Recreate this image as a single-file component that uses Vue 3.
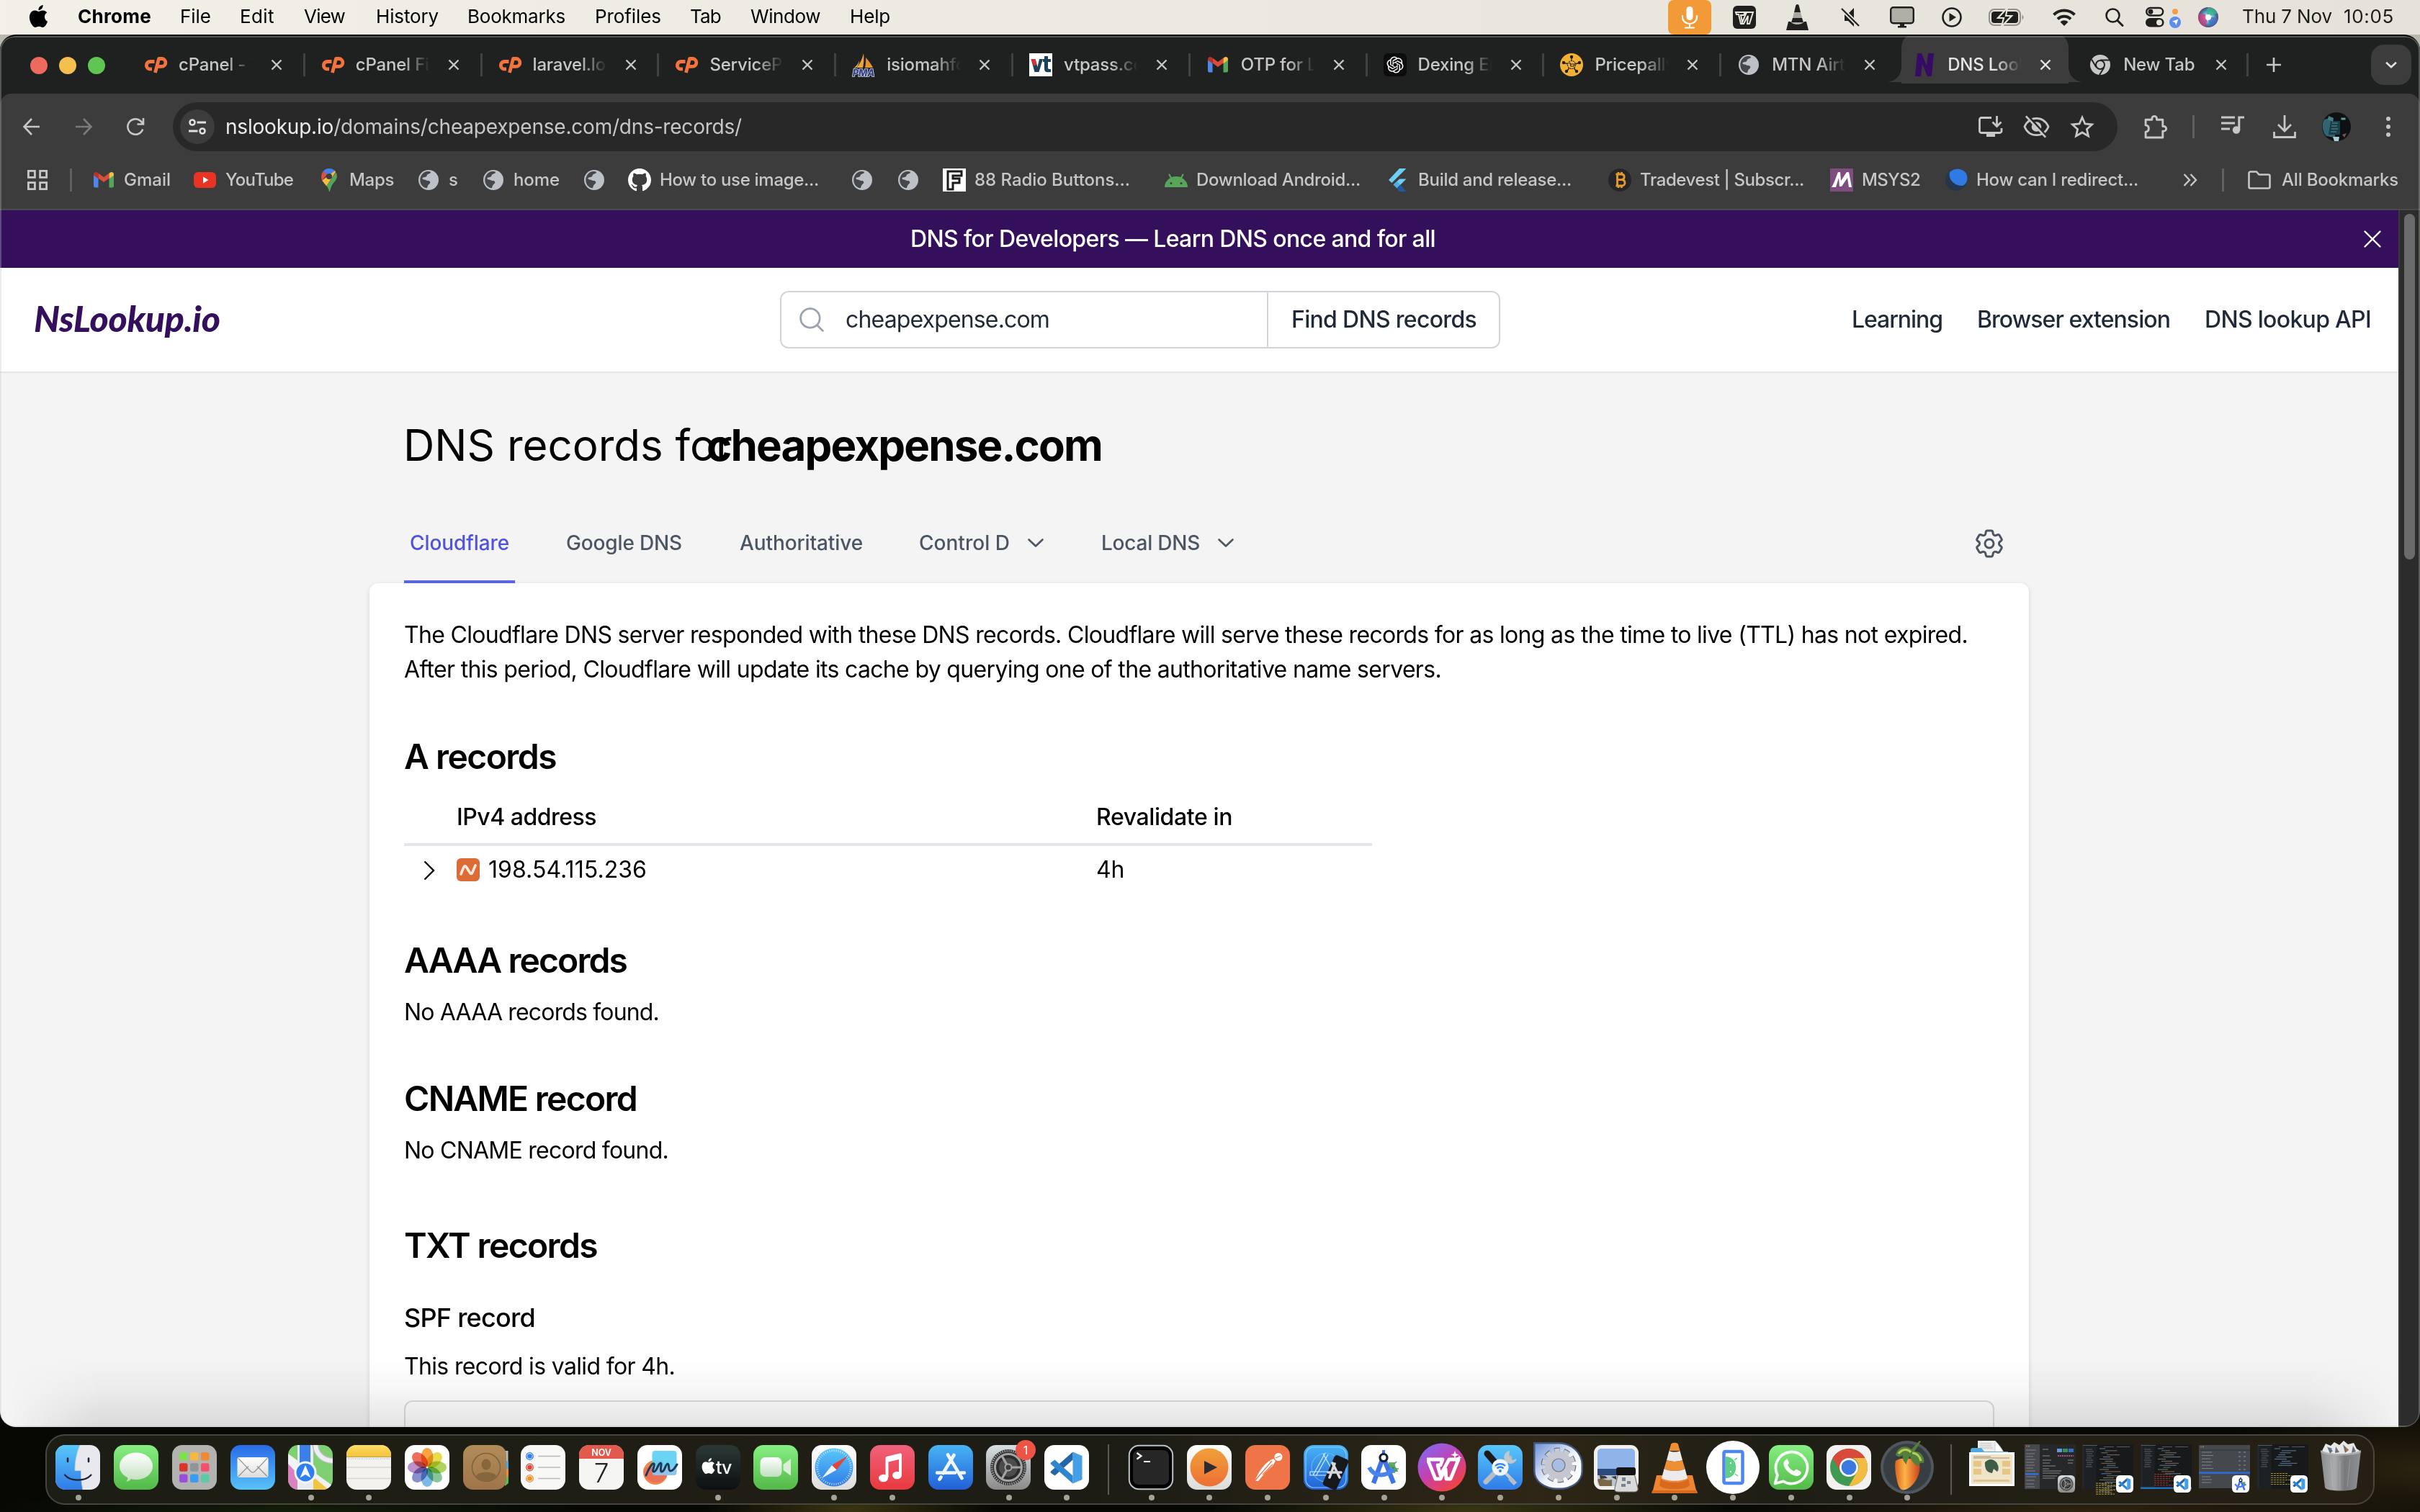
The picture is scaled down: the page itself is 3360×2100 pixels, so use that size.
<script setup>
// Spreads the letters of a label so that it takes the given width in pixels.
const vFit = {
  mounted(el, { value }) {
    if (!value) return
    const natural = el.getBoundingClientRect().width
    el.style.letterSpacing = (value - natural) / el.textContent.length + 'px'
  },
}

const menus = [
  { label: 'Chrome', slot: 142, w: 102 },
  { label: 'File', slot: 83, w: 43 },
  { label: 'Edit', slot: 89, w: 48 },
  { label: 'View', slot: 100, w: 57 },
  { label: 'History', slot: 127, w: 87 },
  { label: 'Bookmarks', slot: 177, w: 136 },
  { label: 'Profiles', slot: 132, w: 92 },
  { label: 'Tab', slot: 84, w: 43 },
  { label: 'Window', slot: 138, w: 97 },
  { label: 'Help', slot: 80, w: 56 },
]

const status = [
  { id: 's-mic', w: 60, h: 48, slot: 90 },
  { id: 's-wps', w: 32, h: 32, slot: 74 },
  { id: 's-cone', w: 31, h: 36, slot: 76 },
  { id: 's-mute', w: 26, h: 28, slot: 68 },
  { id: 's-display', w: 34, h: 30, slot: 72 },
  { id: 's-play', w: 28, h: 28, slot: 65 },
  { id: 's-battery', w: 49, h: 24, slot: 88 },
  { id: 's-wifi', w: 34, h: 26, slot: 74 },
  { id: 's-search', w: 25, h: 26, slot: 56 },
  { id: 's-control', w: 49, h: 30, slot: 73 },
  { id: 's-siri', w: 28, h: 28, slot: 61 },
]

const tabs = [
  { icon: 'f-cpanel', label: 'cPanel - Tools' },
  { icon: 'f-cpanel', label: 'cPanel File' },
  { icon: 'f-cpanel', label: 'laravel.log' },
  { icon: 'f-cpanel', label: 'ServicePro' },
  { icon: 'f-pma', label: 'isiomahfoods' },
  { icon: 'f-vt', label: 'vtpass.com' },
  { icon: 'f-gmail', label: 'OTP for Lo' },
  { icon: 'f-openai', label: 'Dexing Eng' },
  { icon: 'f-price', label: 'Pricepally' },
  { icon: 'f-globe', label: 'MTN Airtime', narrow: true },
  { icon: 'f-ns', label: 'DNS Lookup', narrow: true, active: true },
  { icon: 'f-chrome', label: 'New Tab', narrow: true },
]

const bookmarks = [
  { icon: 'f-gmail', label: 'Gmail', slot: 141, w: 65 },
  { icon: 'f-youtube', label: 'YouTube', slot: 172, w: 94 },
  { icon: 'f-maps', label: 'Maps', slot: 138, w: 62 },
  { icon: 'f-globe', label: 's', slot: 90 },
  { icon: 'f-globe', label: 'home', slot: 140, w: 64 },
  { icon: 'f-globe', label: '', slot: 63 },
  { icon: 'f-github', label: 'How to use image...', slot: 309, w: 221 },
  { icon: 'f-globe', label: '', slot: 64 },
  { icon: 'f-globe', label: '', slot: 64 },
  { icon: 'f-fbox', label: '88 Radio Buttons...', slot: 308, w: 216 },
  { icon: 'f-android', label: 'Download Android...', slot: 308, w: 228 },
  { icon: 'f-flutter', label: 'Build and release...', slot: 308, w: 213 },
  { icon: 'f-bitcoin', label: 'Tradevest | Subscr...', slot: 308, w: 228 },
  { icon: 'f-msys', label: 'MSYS2', slot: 159, w: 81 },
  { icon: 'f-moon', label: 'How can I redirect...', slot: 300, w: 225 },
]

const resolvers = [
  { label: 'Cloudflare', slot: 217, w: 138, active: true },
  { label: 'Google DNS', slot: 241, w: 161 },
  { label: 'Authoritative', slot: 249, w: 171 },
  { label: 'Control D', slot: 253, w: 126, menu: true },
  { label: 'Local DNS', slot: 240, w: 137, menu: true },
]

const dockMain = [
  { id: 'd-finder', run: true }, { id: 'd-messages' }, { id: 'd-launchpad' }, { id: 'd-mail' },
  { id: 'd-maps', run: true }, { id: 'd-notes', run: true }, { id: 'd-photos' }, { id: 'd-contacts' },
  { id: 'd-reminders' }, { id: 'd-calendar' }, { id: 'd-freeform' }, { id: 'd-tv', run: true },
  { id: 'd-facetime' }, { id: 'd-safari', run: true }, { id: 'd-music', run: true }, { id: 'd-appstore' },
  { id: 'd-settings', run: true, badge: '1' }, { id: 'd-vscode', run: true },
]
const dockApps = [
  'd-terminal', 'd-player', 'd-postman', 'd-simulator', 'd-studio', 'd-wps', 'd-wireless',
  'd-cog', 'd-preview', 'd-vlc', 'd-emulator', 'd-whatsapp', 'd-chrome', 'd-fl',
]

const petals = ['#f59b2c', '#e6d83a', '#a8cf4b', '#7bc08c', '#6fb2e2', '#7d84c6', '#b685c4', '#ee5d4b']
const spokes = Array.from({ length: 48 }, (_, i) => i * 7.5)
const padColors = ['#7be04a', '#f5b840', '#ef8a34', '#d8352c', '#8f9698', '#f2506b', '#9b4fd8', '#3a9cf0', '#5cc9a7']

// Rows of code in the minimised editor windows: indent, length and tint of each.
function codeRows(count, seed) {
  const tints = ['#5f7f9e', '#8a6a55', '#6d7f6a', '#6f6f76']
  return Array.from({ length: count }, (_, i) => ({
    y: 6 + i * 2.9,
    x: 24 + ((i * seed) % 5) * 2.5,
    w: 8 + ((i * seed * 3) % 17),
    tint: tints[(i * seed) % 4],
  }))
}
const minimised = [
  { kind: 'editor', rows: codeRows(22, 3), term: '#a58c3a', termY: 84 },
  { kind: 'editor', rows: codeRows(13, 7), term: '#a63a34', termY: 64, bar: true },
  { kind: 'list' },
  { kind: 'editor', rows: codeRows(9, 4), term: '#a08a2e', termY: 62 },
]
</script>

<template>
  <div class="screen">
    <svg class="sprite" width="0" height="0" aria-hidden="true">
      <defs>
        <linearGradient id="gBlue" x1="0" y1="0" x2="0" y2="1"><stop offset="0" stop-color="#5ac8fa" /><stop offset="1" stop-color="#2f7be8" /></linearGradient>
        <linearGradient id="gBlueUp" x1="0" y1="0" x2="0" y2="1"><stop offset="0" stop-color="#2a6be8" /><stop offset="1" stop-color="#57c3f8" /></linearGradient>
        <linearGradient id="gStore" x1="0" y1="0" x2="0" y2="1"><stop offset="0" stop-color="#48b4f4" /><stop offset="1" stop-color="#2160d8" /></linearGradient>
        <linearGradient id="gGreen" x1="0" y1="0" x2="0" y2="1"><stop offset="0" stop-color="#86ee83" /><stop offset="1" stop-color="#53b948" /></linearGradient>
        <linearGradient id="gWhite" x1="0" y1="0" x2="0" y2="1"><stop offset="0" stop-color="#ffffff" /><stop offset="1" stop-color="#dcdcda" /></linearGradient>
        <linearGradient id="gPearl" x1="0" y1="0" x2="0" y2="1"><stop offset="0" stop-color="#ffffff" /><stop offset="1" stop-color="#c2dfbf" /></linearGradient>
        <linearGradient id="gRed" x1="0" y1="0" x2="0" y2="1"><stop offset="0" stop-color="#f0627a" /><stop offset="1" stop-color="#e9393f" /></linearGradient>
        <linearGradient id="gBrown" x1="0" y1="0" x2="0" y2="1"><stop offset="0" stop-color="#b18d58" /><stop offset="1" stop-color="#a0744a" /></linearGradient>
        <linearGradient id="gYellow" x1="0" y1="0" x2="0" y2="1"><stop offset="0" stop-color="#fbdc6a" /><stop offset="1" stop-color="#f7c435" /></linearGradient>
        <linearGradient id="gTv" x1="0" y1="0" x2="0" y2="1"><stop offset="0" stop-color="#2b3836" /><stop offset="1" stop-color="#0c1012" /></linearGradient>
        <linearGradient id="gGrey" x1="0" y1="0" x2="0" y2="1"><stop offset="0" stop-color="#d8e0e4" /><stop offset="1" stop-color="#8c8a88" /></linearGradient>
        <linearGradient id="gOrange" x1="0" y1="0" x2="0" y2="1"><stop offset="0" stop-color="#f0a03a" /><stop offset="1" stop-color="#ee6f34" /></linearGradient>
        <linearGradient id="gWps" x1="0.1" y1="0" x2="0.8" y2="1"><stop offset="0" stop-color="#7d6cf6" /><stop offset="0.5" stop-color="#c540b0" /><stop offset="1" stop-color="#f8432e" /></linearGradient>
        <linearGradient id="gFruit" x1="0" y1="0" x2="1" y2="0"><stop offset="0" stop-color="#d9651f" /><stop offset="0.4" stop-color="#ffb347" /><stop offset="1" stop-color="#c8431a" /></linearGradient>
        <linearGradient id="gMetal" x1="0" y1="0" x2="1" y2="0"><stop offset="0" stop-color="#8a8c8d" /><stop offset="0.35" stop-color="#a9abac" /><stop offset="0.6" stop-color="#77797a" /><stop offset="1" stop-color="#8f9192" /></linearGradient>
        <linearGradient id="gGearBlue" x1="0" y1="0" x2="1" y2="1"><stop offset="0" stop-color="#6f93d8" /><stop offset="0.55" stop-color="#f3f6fc" /><stop offset="1" stop-color="#ffffff" /></linearGradient>
        <radialGradient id="gSiri"><stop offset="0" stop-color="#ffffff" /><stop offset="0.35" stop-color="#9fc6ee" /><stop offset="0.7" stop-color="#3f8f9c" /><stop offset="1" stop-color="#5a3f86" /></radialGradient>
        <clipPath id="round"><rect width="62" height="62" rx="14" /></clipPath>
      </defs>

      <!-- Menu bar -->
      <symbol id="s-mic" viewBox="0 0 60 48"><rect width="60" height="48" rx="8" fill="#f29a38" /><rect x="25.500" y="9" width="9" height="19" rx="4.500" fill="#fff" /><path d="M20 22v2a10 9 0 0 0 20 0v-2M30 33v5M24 38.500h12" fill="none" stroke="#fff" stroke-width="2.200" stroke-linecap="round" /></symbol>
      <symbol id="s-wps" viewBox="0 0 32 32"><rect width="32" height="32" rx="6" fill="#1f1f1d" /><path d="M4 9h13l-2 4h-4l2 10 6-14h9l-5 16h-3l1-11-6 11h-4L8 12H5z" fill="none" stroke="#e9e6dc" stroke-width="2" /></symbol>
      <symbol id="s-cone" viewBox="0 0 31 36"><path d="M15.500 0c1.500 0 2 1 2.300 2L20 11h-9l2.200-9c.3-1 .8-2 2.300-2z" fill="#1f1f1d" /><path d="M11 11h9l2 8H9z" fill="#a8a69e" /><path d="M9 19h13l2 6.500H7z" fill="#1f1f1d" /><path d="M7 25h17c-2 2.500-15 2.500-17 0z" fill="#a8a69e" /><path d="M3 24h3c3 5 16 5 19 0h3l3 12H0z" fill="#1f1f1d" /></symbol>
      <symbol id="s-mute" viewBox="0 0 26 28"><path d="M5 9h5l8-8v26l-8-8H5z" fill="#1f1f1d" /><path d="M1 2l24 24" stroke="#e6e3da" stroke-width="6" /><path d="M1 2l24 24" stroke="#1f1f1d" stroke-width="2.200" /></symbol>
      <symbol id="s-display" viewBox="0 0 34 30"><rect x="1.200" y="1.200" width="31.600" height="22" rx="3.500" fill="#b1aea6" stroke="#1f1f1d" stroke-width="2.400" /><path d="M14 24h6v3h3v2.500H11V27h3z" fill="#1f1f1d" /></symbol>
      <symbol id="s-play" viewBox="0 0 28 28"><circle cx="14" cy="14" r="12.500" fill="none" stroke="#1f1f1d" stroke-width="2.600" /><path d="M10.500 8l9.500 6-9.500 6z" fill="#1f1f1d" /></symbol>
      <symbol id="s-battery" viewBox="0 0 49 24"><rect x="1" y="1" width="43" height="22" rx="7" fill="none" stroke="#94918a" stroke-width="2" /><rect x="4" y="4" width="37" height="16" rx="4" fill="#1f1f1d" /><path d="M46.500 8.500a4 4 0 0 1 0 7z" fill="#94918a" /><path d="M26-1L13 13h8l-3 12L32 10h-8z" fill="#1f1f1d" stroke="#e6e3da" stroke-width="2.200" /></symbol>
      <symbol id="s-wifi" viewBox="0 0 34 26"><path d="M2.500 9.500a20.500 20.500 0 0 1 29 0M8 15.500a12.500 12.500 0 0 1 18 0" fill="none" stroke="#1f1f1d" stroke-width="4" /><path d="M17 25l-5.500-5.500a8 8 0 0 1 11 0z" fill="#1f1f1d" /></symbol>
      <symbol id="s-search" viewBox="0 0 25 26"><circle cx="10.500" cy="10.500" r="9" fill="none" stroke="#1f1f1d" stroke-width="2.600" /><path d="M17 17.500l7 7" stroke="#1f1f1d" stroke-width="3" stroke-linecap="round" /></symbol>
      <symbol id="s-control" viewBox="0 0 49 30"><rect x="1.200" y="2" width="23" height="10.500" rx="5.250" fill="none" stroke="#1f1f1d" stroke-width="2.400" /><circle cx="7" cy="7.250" r="3.400" fill="#1f1f1d" /><rect y="16" width="25.500" height="12.500" rx="6.250" fill="#1f1f1d" /><circle cx="19" cy="22.250" r="4" fill="#e6e3da" /><circle cx="41" cy="7" r="4" fill="#ee9e4c" /><circle cx="41" cy="22" r="8" fill="#5b8def" /><path d="M45.500 17.500l-3.200 8.500-1.500-3.800-3.800-1.500z" fill="#fff" /></symbol>
      <symbol id="s-siri" viewBox="0 0 28 28"><circle cx="14" cy="14" r="14" fill="url(#gSiri)" /><path d="M1 10a14 14 0 0 0 8 17c4-6 3-12 5-13C9 9 5 8 1 10z" fill="#d83a7c" opacity=".75" /><path d="M14 0a14 14 0 0 1 13 9c-5 0-9 2-13 5-3-4-3-10 0-14z" fill="#3bb68c" opacity=".8" /><path d="M14 14c5-1 9 0 13 3a14 14 0 0 1-9 10c-3-3-4-8-4-13z" fill="#3f6fc4" opacity=".8" /><circle cx="14" cy="14" r="4" fill="#fff" /></symbol>
      <symbol id="apple" viewBox="0 0 24 24"><path fill="currentColor" d="M12.152 6.896c-.948 0-2.415-1.078-3.960-1.040-2.040.027-3.910 1.183-4.961 3.014-2.117 3.675-.546 9.103 1.519 12.090 1.013 1.454 2.208 3.090 3.792 3.039 1.520-.065 2.090-.987 3.935-.987 1.831 0 2.350.987 3.960.948 1.637-.026 2.676-1.480 3.676-2.948 1.156-1.688 1.636-3.325 1.662-3.415-.039-.013-3.182-1.221-3.220-4.857-.026-3.040 2.480-4.494 2.597-4.559-1.429-2.090-3.623-2.324-4.390-2.376-2-.156-3.675 1.090-4.610 1.090zM15.530 3.830c.843-1.012 1.400-2.427 1.245-3.830-1.207.052-2.662.805-3.532 1.818-.780.896-1.454 2.338-1.273 3.714 1.338.104 2.715-.688 3.559-1.701" /></symbol>

      <!-- Favicons, 32 x 32 -->
      <symbol id="f-cpanel" viewBox="0 0 32 32"><path d="M14.500 11.500H8.500a5.200 5.200 0 0 0-1 10.300H11" fill="none" stroke="#f2733d" stroke-width="4.800" /><path d="M15.500 27L20.500 7.500h4a5.200 5.200 0 0 1 0 10.800h-5" fill="none" stroke="#f2733d" stroke-width="4.800" stroke-linejoin="round" /></symbol>
      <symbol id="f-pma" viewBox="0 0 32 32"><path d="M16 0c1 8 0 15-1 20H6c5-5 8-12 10-20z" fill="#f0a13f" /><path d="M19 6c5 5 8 10 10 14H18c1-5 1.500-9 1-14z" fill="#e8902f" /><path d="M10 10c0 4-2 8-5 10l-3 1c4-3 7-7 8-11z" fill="#f7c373" /><text x="16" y="31.500" text-anchor="middle" font-family="Inter, sans-serif" font-weight="800" font-style="italic" font-size="13" fill="#343f86" stroke="#d9dbe8" stroke-width="1.600" paint-order="stroke">PMA</text></symbol>
      <symbol id="f-vt" viewBox="0 0 32 32"><rect width="32" height="32" fill="#fff" /><path d="M2.500 8h6l3 11 2.500-11h5l-5.500 18h-6z" fill="#1d4257" /><path d="M2.500 8h6l2 7-4 3z" fill="#d5323a" /><path d="M19 8h2V4h5v4h4v4h-4v8c0 2 1 2 4 2v4c-6 1-9 0-9-5v-9h-2z" fill="#1d4257" /></symbol>
      <symbol id="f-gmail" viewBox="0 0 32 32"><path d="M2 26.500V9l6.500 4.500v13H4a2 2 0 0 1-2-2z" fill="#4f86ec" /><path d="M23.500 26.500v-13L30 9v15.500a2 2 0 0 1-2 2z" fill="#57a55a" /><path d="M8.500 13.500V6.500L16 12l7.500-5.500v7L16 19z" fill="#de4b3d" /><path d="M2 9.500V8c0-2.600 3-3.800 5-2.400l1.500 1.100v7.600z" fill="#b83228" /><path d="M30 9.500V8c0-2.600-3-3.800-5-2.400l-1.500 1.100v7.600z" fill="#f3bf42" /></symbol>
      <symbol id="f-openai" viewBox="0 0 32 32"><rect width="32" height="32" rx="6" fill="#0c0c0c" /><path transform="translate(4.500 4.500) scale(.96)" fill="#fff" d="M22.282 9.821a5.985 5.985 0 0 0-.516-4.911 6.046 6.046 0 0 0-6.510-2.900A6.065 6.065 0 0 0 4.981 4.182a5.985 5.985 0 0 0-3.998 2.900 6.046 6.046 0 0 0 .743 7.097 5.980 5.980 0 0 0 .511 4.911 6.051 6.051 0 0 0 6.515 2.900A5.985 5.985 0 0 0 13.260 24a6.056 6.056 0 0 0 5.772-4.206 5.989 5.989 0 0 0 3.998-2.900 6.056 6.056 0 0 0-.748-7.073zm-9.022 12.608a4.476 4.476 0 0 1-2.876-1.041l.142-.080 4.778-2.758a.795.795 0 0 0 .393-.681v-6.737l2.020 1.169a.071.071 0 0 1 .038.052v5.583a4.504 4.504 0 0 1-4.495 4.494zm-9.661-4.125a4.471 4.471 0 0 1-.535-3.014l.142.085 4.783 2.758a.771.771 0 0 0 .781 0l5.843-3.369v2.332a.080.080 0 0 1-.033.062L9.740 19.950a4.499 4.499 0 0 1-6.141-1.646zM2.341 7.896a4.485 4.485 0 0 1 2.366-1.973V11.600a.766.766 0 0 0 .388.677l5.814 3.354-2.020 1.169a.076.076 0 0 1-.071 0l-4.830-2.787A4.504 4.504 0 0 1 2.341 7.872zm16.596 3.856L13.104 8.364 15.119 7.200a.076.076 0 0 1 .071 0l4.830 2.791a4.494 4.494 0 0 1-.677 8.104v-5.677a.790.790 0 0 0-.407-.667zm2.011-3.023l-.142-.085-4.774-2.782a.776.776 0 0 0-.785 0L9.409 9.230V6.897a.066.066 0 0 1 .028-.062l4.830-2.787a4.499 4.499 0 0 1 6.680 4.660zM8.307 12.863l-2.020-1.164a.080.080 0 0 1-.038-.057V6.074a4.499 4.499 0 0 1 7.376-3.454l-.142.081L8.704 5.459a.795.795 0 0 0-.393.681zm1.097-2.365l2.602-1.500 2.607 1.500v2.999l-2.597 1.500-2.607-1.500Z" /></symbol>
      <symbol id="f-price" viewBox="0 0 32 32"><circle cx="16" cy="16" r="16" fill="#f2b134" /><path d="M16 5v7M27 13l-6 2M5 13l6 2M9.500 25l3.500-5M22.500 25L19 20" stroke="#2b2310" stroke-width="1.400" /><g fill="#1e1a0c"><circle cx="16" cy="5" r="2.200" /><circle cx="27" cy="13" r="2.200" /><circle cx="5" cy="13" r="2.200" /><circle cx="9" cy="25" r="2.200" /><circle cx="23" cy="25" r="2.200" /></g><circle cx="16" cy="16" r="5.500" fill="#f2b134" stroke="#2b2310" stroke-width="1.200" stroke-dasharray="2 1" /><path d="M12.500 13.500h1.500l1 4.500h4l1-3h-5" fill="none" stroke="#2b2310" stroke-width="1.200" /></symbol>
      <symbol id="f-globe" viewBox="0 0 32 32"><circle cx="16" cy="16" r="14" fill="#bcc1c7" /><path d="M17 4.500c3 .2 2 3.500-.5 4-2.500.500-2.500 2-2 3.500.5 1.500 3.500 1 5 2s3 1 4.500.500c2-.8 3.200.5 2.500 2.500-1 3-3 4.500-4 6-1.200 2-3 3.500-5 3.500-1.500 0-1-2-1.200-3.500-.3-2-3-2-3-4 0-1.500 1-2.500-.5-3.500-2-1.300-5-.5-8.300-1C5 8.500 10 4 17 4.500z" fill="#3b3c3d" opacity=".0" /><path d="M13 4.300c3-.6 6 .2 6 1.200 0 1.500-3 1.800-4.500 2.800-1.200.9-.4 2.300-2 3.200-2 1-4 .4-5 1.800-.6 1 .6 2 2.500 2.200 2 .2 2.800 1.500 4.800 1.500 1.800 0 3.500.6 3.500 2.200 0 2.300-3 2.800-3.500 5-.3 1.300-.4 2.500-1.200 3C7.500 26.500 4.300 21.500 4.300 16c0-5.500 3.500-10.500 8.700-11.700z" fill="#45474a" /><path d="M27.600 15c.5 5-2.300 9.500-5.800 11.300-1-.8-.3-2.500.8-4 1.300-1.800 1.500-3 .5-4.500-1-1.600 0-3.300 1.500-3.300 1.200 0 2.200-.2 3 .5z" fill="#45474a" opacity=".0" /></symbol>
      <symbol id="f-ns" viewBox="0 0 32 32"><path d="M3 32L6 0h6l7 17L21 0h8l-3 32h-6L13 15l-2 17z" fill="#360b63" /></symbol>
      <symbol id="f-chrome" viewBox="0 0 32 32"><circle cx="16" cy="16" r="14" fill="#c7c7c7" /><circle cx="16" cy="16" r="7" fill="#1f2120" /><circle cx="16" cy="16" r="5" fill="#c7c7c7" /><path d="M16 9.500h13M10.400 19.200L4 8.500M21.500 19.500L15 30" stroke="#1f2120" stroke-width="2" /></symbol>
      <symbol id="f-youtube" viewBox="0 0 32 32"><rect y="5" width="31" height="22" rx="6" fill="#ea3323" /><path d="M13 11.500l7.500 4.500-7.500 4.500z" fill="#fff" /></symbol>
      <symbol id="f-maps" viewBox="0 0 32 32"><path d="M16 0a11 11 0 0 0-8.500 4L16 12l8-9A11 11 0 0 0 16 0z" fill="#4a80ea" /><path d="M7.500 4A11 11 0 0 0 5 11c0 2 .5 3.800 1.300 5.500L13 8.500z" fill="#de4f3f" /><path d="M6.300 16.500c1.500 3 4 5 6 8L25 5l-1-2z" fill="#f3bd42" /><path d="M25.500 5.500c3 6 .5 10-2.500 13.500-3.500 4-5 8-6 13h-1c-.8-3-1.800-5.500-3.500-8z" fill="#57a55a" /><circle cx="16" cy="11" r="4" fill="#3c3c3c" /></symbol>
      <symbol id="f-github" viewBox="0 0 16 16"><path fill="#fff" d="M8 0C3.580 0 0 3.580 0 8c0 3.540 2.290 6.530 5.470 7.590.4.070.55-.170.55-.380 0-.190-.010-.820-.010-1.490-2.010.370-2.530-.490-2.690-.940-.090-.230-.480-.940-.820-1.130-.280-.150-.680-.520-.010-.530.630-.010 1.080.580 1.230.820.720 1.210 1.870.870 2.330.660.070-.520.280-.870.510-1.070-1.780-.2-3.640-.890-3.640-3.950 0-.870.310-1.590.820-2.150-.080-.2-.360-1.020.080-2.120 0 0 .670-.210 2.200.820.640-.180 1.320-.270 2-.270s1.360.090 2 .270c1.530-1.040 2.200-.820 2.200-.820.440 1.100.160 1.920.080 2.120.510.560.820 1.270.820 2.150 0 3.070-1.870 3.750-3.650 3.950.290.250.540.730.540 1.480 0 1.070-.010 1.930-.010 2.200 0 .210.150.460.550.380A8.010 8.010 0 0 0 16 8c0-4.420-3.580-8-8-8z" /></symbol>
      <symbol id="f-fbox" viewBox="0 0 32 32"><rect width="32" height="32" fill="#fff" /><path d="M7 4h19v6H14v4h9v6h-9v9H7z" fill="#fff" stroke="#1b1b1b" stroke-width="3" /></symbol>
      <symbol id="f-android" viewBox="0 0 32 32"><path d="M0 26a16 15 0 0 1 32 0z" fill="#57a55a" /><path d="M6.500 8.500l4 7M25.500 8.500l-4 7" stroke="#57a55a" stroke-width="2.200" stroke-linecap="round" /><circle cx="9" cy="20.500" r="1.500" fill="#3c3c3c" /><circle cx="23" cy="20.500" r="1.500" fill="#3c3c3c" /></symbol>
      <symbol id="f-flutter" viewBox="0 0 32 32"><path d="M18 0h9.500L7.500 20l-4.500-4z" fill="#6fcef5" /><path d="M18 14.500h9.500L19 23l-5-4.500z" fill="#6fcef5" /><path d="M9.500 22.500l5-5 4.700 5-4.700 5z" fill="#4fb0e8" /><path d="M14.500 27.500l4.700-5 8.300 9.500H18z" fill="#1f5a9c" /></symbol>
      <symbol id="f-bitcoin" viewBox="0 0 32 32"><circle cx="16" cy="16" r="16" fill="#26262a" /><path d="M10.500 8h7.500c5.500 0 5.500 7 .5 7.500 6 .5 6 8.500 0 8.500h-8M12.500 8v16M12.500 15.700h6M14 5v3M18.500 5v3M14 24v3M18.500 24v3" fill="none" stroke="#e89a2b" stroke-width="2.800" /></symbol>
      <symbol id="f-msys" viewBox="0 0 32 32"><rect width="32" height="32" fill="#804d80" /><path d="M2 26C6 20 8 12 11 5h3l1 12 8-12h3l4 21h-4l-2-13-8 12h-3l-1-12-4 13z" fill="#fff" /></symbol>
      <symbol id="f-moon" viewBox="0 0 32 32"><circle cx="16" cy="16" r="15" fill="#24364d" /><path d="M7 5C14-2 26 0 30 7c3 8 1 14-5 17C13 24 5 16 7 5z" fill="#2f7ae5" /></symbol>

      <!-- Browser controls -->
      <symbol id="c-close" viewBox="0 0 16 16"><path d="M1.500 1.500l13 13M14.500 1.500l-13 13" stroke="currentColor" stroke-width="2.400" /></symbol>
      <symbol id="c-back" viewBox="0 0 24 24"><path d="M23 12H2M12 1L1.500 12 12 23" fill="none" stroke="currentColor" stroke-width="2.600" /></symbol>
      <symbol id="c-reload" viewBox="0 0 26 26"><path d="M23.200 16.500A10.700 10.700 0 1 1 20.500 5.300L24 9M24 1v8.500h-8.500" fill="none" stroke="currentColor" stroke-width="2.600" /></symbol>
      <symbol id="c-site" viewBox="0 0 24 24"><circle cx="5" cy="6" r="3.500" fill="none" stroke="currentColor" stroke-width="2.600" /><path d="M11.500 6H24M0 18h12.500" stroke="currentColor" stroke-width="2.800" /><circle cx="19" cy="18" r="3.500" fill="none" stroke="currentColor" stroke-width="2.600" /></symbol>
      <symbol id="c-install" viewBox="0 0 34 30"><path d="M18 2.500H4A2.500 2.500 0 0 0 1.500 5v16A2.500 2.500 0 0 0 4 23.500h25.500a2.500 2.500 0 0 0 2.500-2.500v-4" fill="none" stroke="currentColor" stroke-width="2.800" /><path d="M11 24h12v5H11z" fill="currentColor" /><path d="M25.500 0v14M19.500 8.500l6 6 6-6" fill="none" stroke="currentColor" stroke-width="2.800" /></symbol>
      <symbol id="c-eye" viewBox="0 0 38 32"><path d="M19 4c8 0 14 5 17 12-3 7-9 12-17 12S5 23 2 16C5 9 11 4 19 4z" fill="none" stroke="currentColor" stroke-width="2.800" /><circle cx="19" cy="16" r="7" fill="currentColor" /><path d="M5-1l30 33" stroke="#282828" stroke-width="4" /><path d="M4 1l28 30" stroke="currentColor" stroke-width="2.800" /></symbol>
      <symbol id="c-star" viewBox="0 0 32 32"><path d="M16 3.800l3.700 8.400 9.100.9-6.800 6.100 2 9L16 23.500l-8 4.700 2-9-6.800-6.100 9.100-.9z" fill="none" stroke="currentColor" stroke-width="2.600" /></symbol>
      <symbol id="c-puzzle" viewBox="0 0 32 32"><path d="M3 6h8.500V4.500a3.200 3.200 0 0 1 6.400 0V6H26v9h1.500a3.200 3.200 0 0 1 0 6.400H26V30H3v-7.500c5.500-.5 5.500-8.500 0-9z" fill="none" stroke="currentColor" stroke-width="2.800" stroke-linejoin="round" /></symbol>
      <symbol id="c-music" viewBox="0 0 32 28"><path d="M0 3h19M0 11h19M0 19h12" stroke="currentColor" stroke-width="2.800" /><circle cx="21" cy="20.500" r="5.200" fill="currentColor" /><path d="M24.800 21V3H32" fill="none" stroke="currentColor" stroke-width="3" /></symbol>
      <symbol id="c-download" viewBox="0 0 32 32"><path d="M16 0v22M7 13l9 9 9-9M1.500 23v7.500h29V23" fill="none" stroke="currentColor" stroke-width="2.800" /></symbol>
      <symbol id="c-avatar" viewBox="0 0 40 40"><circle cx="20" cy="20" r="20" fill="#0d1114" /><path d="M3 10l11-3 4 14v14L6 33A20 20 0 0 1 3 10z" fill="#2f6470" /><path d="M12 12h13v19H9z" fill="#1b3c49" /><path d="M9 5l7 3-1 5-7-3z" fill="#477f86" /><path d="M27 8h5v2h-5zM14 15h8M13 19h8M13 23h9M12 27h8" stroke="#5e94a0" stroke-width="1.200" fill="#7aa" /><path d="M15 34h9l-1 6h-6z" fill="#a7cdd0" /><path d="M28 31l6-2-3 6z" fill="#83563e" /></symbol>
      <symbol id="c-chevron" viewBox="0 0 22 12"><path d="M1.500 1.500L11 10.500l9.500-9" fill="none" stroke="currentColor" stroke-width="2.600" stroke-linecap="round" stroke-linejoin="round" /></symbol>
      <symbol id="c-folder" viewBox="0 0 32 26"><path d="M1.500 3.500a2 2 0 0 1 2-2H12l3.500 4h13a2 2 0 0 1 2 2v15a2 2 0 0 1-2 2h-25a2 2 0 0 1-2-2z" fill="none" stroke="currentColor" stroke-width="2.600" /></symbol>
      <symbol id="c-gear" viewBox="0 0 24 24"><g fill="none" stroke="currentColor" stroke-width="1.500" stroke-linejoin="round"><path d="M9.594 3.940c.090-.542.560-.940 1.110-.940h2.593c.550 0 1.020.398 1.110.940l.213 1.281c.063.374.313.686.645.870.074.040.147.083.220.127.325.196.720.257 1.075.124l1.217-.456a1.125 1.125 0 0 1 1.370.490l1.296 2.247a1.125 1.125 0 0 1-.260 1.431l-1.003.827c-.293.241-.438.613-.430.992a7.723 7.723 0 0 1 0 .255c-.008.378.137.750.430.991l1.004.827c.424.350.534.955.260 1.430l-1.298 2.247a1.125 1.125 0 0 1-1.369.491l-1.217-.456c-.355-.133-.750-.072-1.076.124a6.470 6.470 0 0 1-.220.128c-.331.183-.581.495-.644.869l-.213 1.281c-.090.543-.560.940-1.110.940h-2.594c-.550 0-1.019-.398-1.110-.940l-.213-1.281c-.062-.374-.312-.686-.644-.870a6.520 6.520 0 0 1-.220-.127c-.325-.196-.720-.257-1.076-.124l-1.217.456a1.125 1.125 0 0 1-1.369-.490l-1.297-2.247a1.125 1.125 0 0 1 .260-1.431l1.004-.827c.292-.240.437-.613.430-.991a6.932 6.932 0 0 1 0-.255c.007-.380-.138-.751-.430-.992l-1.004-.827a1.125 1.125 0 0 1-.260-1.430l1.297-2.247a1.125 1.125 0 0 1 1.370-.491l1.216.456c.356.133.751.072 1.076-.124.072-.044.146-.086.220-.128.332-.183.582-.495.644-.869l.214-1.280Z" /><circle cx="12" cy="12" r="3" /></g></symbol>

      <!-- Dock, 62 x 62 -->
      <symbol id="d-finder" viewBox="0 0 62 62"><g clip-path="url(#round)"><rect width="62" height="62" fill="#e7e9ee" /><path d="M0 0h34c-5 12-7 23-7 35.500h8.500c0 10 .5 18 2.500 26.500H0z" fill="url(#gBlue)" /></g><path d="M34 0c-5 12-7 23-7 35.500h8.500c0 10 .5 18 2.500 26.500" fill="none" stroke="#c5ccd6" stroke-width="1" /><path d="M17 18.500v4.500M46 18.500v4.500" stroke="#223" stroke-width="2.600" stroke-linecap="round" /><path d="M13 41.500c8 9.500 28 9.500 36.500 0" fill="none" stroke="#1f2230" stroke-width="2.200" stroke-linecap="round" /></symbol>
      <symbol id="d-messages" viewBox="0 0 62 62"><rect width="62" height="62" rx="14" fill="url(#gGreen)" /><path d="M31 10.500c13 0 23 8 23 18.700S44 48 31 48c-2.500 0-5-.3-7-1-1.500 2-4.500 3.800-7 3.800 1.800-1.600 2.400-3.500 2.200-5.600C12.300 41.800 8 36 8 29.200 8 18.500 18 10.500 31 10.500z" fill="url(#gPearl)" /></symbol>
      <symbol id="d-mail" viewBox="0 0 62 62"><rect width="62" height="62" rx="14" fill="url(#gBlueUp)" /><rect x="9.500" y="17" width="43" height="28" rx="3" fill="url(#gWhite)" /><path d="M11 18.500l17 18c2 2 4 2 6 0l17-18M11 43.500l14-14M51 43.500l-14-14" fill="none" stroke="#8e9499" stroke-width="1.200" /></symbol>
      <symbol id="d-maps" viewBox="0 0 62 62"><g clip-path="url(#round)"><rect width="62" height="62" fill="#7ed070" /><path d="M0 20l14 6v36H0z" fill="#d882c0" /><path d="M0 12l64 46v4H34L0 26z" fill="#f1f2f4" /><path d="M30 40l26 22H33z" fill="#f3c441" /><rect x="13" width="22" height="62" fill="#e8ebef" /><rect x="16" width="15" height="36" fill="#3b7fe8" /><path d="M38-2c0 14 10 24 26 24" fill="none" stroke="#b9bec4" stroke-width="9" /><path d="M38-2c0 14 10 24 26 24" fill="none" stroke="#eceef0" stroke-width="6" /></g><circle cx="24" cy="38" r="14" fill="#2f7ff2" stroke="#f3f6f9" stroke-width="3" /><path d="M24 28l7.500 17.500L24 41l-7.500 4.500z" fill="#f4f7fb" /></symbol>
      <symbol id="d-notes" viewBox="0 0 62 62"><g clip-path="url(#round)"><rect width="62" height="62" fill="#f3f2ef" /><rect width="62" height="16" fill="url(#gYellow)" /><path d="M0 16.500h62" stroke="#b7a25c" /><path d="M2 19h60" stroke="#b9b7b3" stroke-width="1.500" stroke-dasharray="1 1.500" /><path d="M0 31h62M0 46.500h62" stroke="#d9d7d3" stroke-width="1.500" /></g></symbol>
      <symbol id="d-contacts" viewBox="0 0 62 62"><path d="M58 8h4.500v14H58z" fill="#b9bcc2" /><path d="M58 22h5v11h-5z" fill="#4aa8e0" /><path d="M58 33h5v11h-5z" fill="#ef8b33" /><path d="M58 44h5v9l-5 4z" fill="#55bf50" /><rect width="60" height="62" rx="14" fill="url(#gBrown)" /><circle cx="32" cy="31" r="19.500" fill="none" stroke="#7f6038" stroke-width="1.500" /><ellipse cx="32" cy="27" rx="6.500" ry="7.500" fill="#86663d" /><path d="M18 43c3-7 25-7 28 0-6 9-22 9-28 0z" fill="#86663d" /></symbol>
      <symbol id="d-reminders" viewBox="0 0 62 62"><rect width="62" height="62" rx="14" fill="#f8f8f7" /><path d="M24 15.500h31M24 31h31M24 46.500h31" stroke="#b9b9b9" stroke-width="1.300" /><g fill="none" stroke-width="1.300"><circle cx="12.500" cy="15.500" r="4.800" stroke="#2f7cf0" /><circle cx="12.500" cy="31" r="4.800" stroke="#dc4536" /><circle cx="12.500" cy="46.500" r="4.800" stroke="#e9922f" /></g><circle cx="12.500" cy="15.500" r="3.300" fill="#2f7cf0" /><circle cx="12.500" cy="31" r="3.300" fill="#dc4536" /><circle cx="12.500" cy="46.500" r="3.300" fill="#e9922f" /></symbol>
      <symbol id="d-calendar" viewBox="0 0 62 62"><g clip-path="url(#round)"><rect width="62" height="62" fill="#f5f5f3" /><rect width="62" height="19" fill="#e25a4f" /></g><text x="31" y="15" text-anchor="middle" font-family="Inter, sans-serif" font-weight="600" font-size="12.500" fill="#fff">NOV</text><text x="31" y="51.500" text-anchor="middle" font-family="Inter, sans-serif" font-weight="300" font-size="37" fill="#232323">7</text></symbol>
      <symbol id="d-freeform" viewBox="0 0 62 62"><rect width="62" height="62" rx="14" fill="#fff" /><circle cx="25" cy="38" r="17" fill="#f0894a" /><path d="M9 33a17 17 0 0 0 32 10l-6-22z" fill="#e9675c" opacity=".7" /><rect x="20.500" y="8" width="34" height="34" rx="4" fill="#5ed0f3" opacity=".92" /><path d="M22 30h32v8a4 4 0 0 1-4 4H25a4 4 0 0 1-4-4z" fill="#a3bfe8" opacity=".7" /><path d="M12 42c4-10 9-18 11-16s-4 11 0 11 6-12 9-12-2 12 2 12 5-11 8-11 0 10 4 10 6-5 9-9" fill="none" stroke="#173c59" stroke-width="3" stroke-linecap="round" /></symbol>
      <symbol id="d-tv" viewBox="0 0 62 62"><rect width="62" height="62" rx="14" fill="url(#gTv)" /><svg x="6.500" y="17" width="22" height="24" viewBox="0 0 24 24" color="#fff"><use href="#apple" /></svg><text x="28" y="40" font-family="Inter, sans-serif" font-weight="500" font-size="25" letter-spacing="-1" fill="#fff">tv</text></symbol>
      <symbol id="d-facetime" viewBox="0 0 62 62"><rect width="62" height="62" rx="14" fill="url(#gGreen)" /><rect x="9.500" y="17" width="30" height="27" rx="7" fill="url(#gPearl)" /><path d="M41.500 27L52 19v23.500L41.500 35z" fill="#d9efd6" /></symbol>
      <symbol id="d-safari" viewBox="0 0 62 62"><rect width="62" height="62" rx="14" fill="url(#gWhite)" /><circle cx="31" cy="31" r="26.500" fill="url(#gBlue)" /><g stroke="#d6eafc" stroke-width=".9"><path v-for="a in spokes" :key="a" d="M31 6v3.200" :transform="`rotate(${a} 31 31)`" /></g><path d="M50 15L34.500 34.500 28 28z" fill="#e5443a" /><path d="M14 46l14-18 6.500 6.500z" fill="#f3f3f3" /></symbol>
      <symbol id="d-music" viewBox="0 0 62 62"><rect width="62" height="62" rx="14" fill="url(#gRed)" /><path d="M23.500 45V18L42 13.500V41" fill="none" stroke="#fff" stroke-width="4" stroke-linejoin="round" /><path d="M23.500 17L42 12.500v7L23.500 24z" fill="#fff" /><ellipse cx="18.500" cy="46" rx="6.500" ry="5.200" fill="#fff" /><ellipse cx="37.500" cy="42" rx="6.500" ry="5.200" fill="#fff" /></symbol>
      <symbol id="d-appstore" viewBox="0 0 62 62"><rect width="62" height="62" rx="14" fill="url(#gStore)" /><g stroke="#f2f7fd" stroke-width="4.600" stroke-linecap="round" fill="none"><path d="M35.500 14L20.500 39M27 13.500L46.500 46M12 38.500h25M45 38.500h5M17.500 44.500l-2 3" /></g></symbol>
      <symbol id="d-settings" viewBox="0 0 62 62"><rect width="62" height="62" rx="14" fill="url(#gGrey)" /><circle cx="31" cy="31" r="25" fill="#2c2c2c" /><circle cx="31" cy="31" r="23" fill="none" stroke="#98999a" stroke-width="3.500" stroke-dasharray="1.500 1.500" /><circle cx="31" cy="31" r="18.500" fill="none" stroke="#a3a4a5" stroke-width="3" /><circle cx="31" cy="31" r="13" fill="#4c4c4d" /><path d="M31 31h18M31 31l-9-16M31 31l-9 16" stroke="#a3a4a5" stroke-width="3.200" /><circle cx="31" cy="31" r="4.500" fill="#3c3c3c" stroke="#a3a4a5" stroke-width="2" /></symbol>
      <symbol id="vs-mark" viewBox="0 0 44 44"><path d="M31 0l13 5.500v33L31 44z" fill="#459fe6" /><path d="M31 0v11L6 33l-5-3.500c-1.300-1-1-2.200 0-3z" fill="#2366a8" /><path d="M31 44V33L6 11l-5 3.500c-1.300 1-1 2.200 0 3z" fill="#2e86d1" /></symbol>
      <symbol id="d-vscode" viewBox="0 0 62 62"><rect width="62" height="62" rx="14" fill="#fff" /><use href="#vs-mark" x="8.500" y="9.500" width="44" height="44" /></symbol>
      <symbol id="d-terminal" viewBox="0 0 62 62"><rect x=".8" y=".8" width="60.400" height="60.400" rx="13.500" fill="#000" stroke="#b9c3ca" stroke-width="2" /><rect x="6" y="7" width="50" height="48" rx="8" fill="#262626" /><path d="M11.500 11l6 4.200-6 4.300M21 23h9" fill="none" stroke="#fff" stroke-width="2.200" /></symbol>
      <symbol id="d-player" viewBox="0 0 62 62"><rect width="62" height="62" rx="14" fill="url(#gWhite)" /><circle cx="31" cy="31" r="26.500" fill="url(#gOrange)" /><path d="M24 22l18 9-18 9.500z" fill="#2c2b31" /></symbol>
      <symbol id="d-postman" viewBox="0 0 62 62"><rect width="62" height="62" rx="14" fill="#ef7448" /><circle cx="46" cy="16.500" r="5.500" fill="#fff" /><path d="M42 14l6 3M14 48c5-12 14-25 25-29l3 3-4 7-10 9-10 12-5-.500z" fill="#fff" /><path d="M13 50l24-28M24 41l14-14M42 18l7-3" stroke="#ef7448" stroke-width="1.300" /></symbol>
      <symbol id="d-simulator" viewBox="0 0 62 62"><rect width="62" height="62" rx="14" fill="url(#gStore)" /><g fill="none" stroke="#8cc8f5" stroke-width="1.200"><rect x="3" y="3" width="56" height="56" rx="11" /><circle cx="31" cy="31" r="20" opacity=".6" /><path d="M30 11l-17 31M34 13L17 43M27 12l20 36M9 37h36v5H9z" stroke="#d5ebfc" /></g><rect x="34" y="15" width="21" height="46" rx="4" transform="rotate(24 44 38)" fill="#17181b" /><path d="M34 38h18M43 26l-7 19M40 25l10 20" stroke="#d5d8dc" stroke-width="3.600" stroke-linecap="round" /></symbol>
      <symbol id="d-studio" viewBox="0 0 62 62"><rect width="62" height="62" rx="14" fill="#fff" /><path d="M38 26a14 13 0 0 1 13 11l-13 1z" fill="#57a55a" /><path d="M38 24h9v15h-9z" fill="#57a55a" opacity=".9" /><path d="M45 27l4-4M49 33h3" stroke="#57a55a" stroke-width="1.600" /><circle cx="44" cy="32" r="1.300" fill="#173" /><path d="M30 18L17 53M31 18l14 35" stroke="#3f73e6" stroke-width="6.500" /><path d="M11 31c6 12 22 15 34 2" fill="none" stroke="#4b83ee" stroke-width="6" /><path d="M29 7h4v8h-4z" fill="#3f73e6" /><circle cx="31" cy="17.500" r="5" fill="#fff" stroke="#17202c" stroke-width="3.200" /></symbol>
      <symbol id="d-wps" viewBox="0 0 62 62"><circle cx="31" cy="31" r="33.500" fill="url(#gWps)" /><path d="M10 20h22l-3 8h-4l4 14L41 20h13L43 47h-6l-1-14-7 14h-7L12 22" fill="none" stroke="#fff" stroke-width="4.800" stroke-linejoin="round" /><path d="M49 8l1.500 4 4 1.500-4 1.500L49 19l-1.500-4-4-1.500 4-1.500zM55 14l1 2.500 2.500 1-2.500 1-1 2.500-1-2.500-2.500-1 2.500-1z" fill="#fff" /></symbol>
      <symbol id="d-wireless" viewBox="0 0 62 62"><rect width="62" height="62" rx="14" fill="url(#gBlue)" /><path d="M13 12l36 38" stroke="#c5cbd1" stroke-width="4" stroke-linecap="round" /><path d="M13 12l14 16" stroke="#1b1b1c" stroke-width="9" stroke-linecap="round" /><path d="M44 46l8 8" stroke="#b6bdc4" stroke-width="6" /><path d="M11 51L44 18" stroke="#b7bdc3" stroke-width="7" stroke-linecap="round" /><path d="M44 8a9 9 0 1 0 10 11l-6 2-5-4z" fill="#c2c7cd" /><circle cx="31" cy="31" r="11.500" fill="#f2f5f7" /><path d="M24 29a10 10 0 0 1 14 0M26.500 32.500a6 6 0 0 1 9 0" fill="none" stroke="#2f86ec" stroke-width="2.400" /><circle cx="31" cy="36" r="1.900" fill="#2f86ec" /></symbol>
      <symbol id="d-cog" viewBox="0 0 62 62"><path d="M-4-4h34a34 32 0 0 1 35 32v8a32 26 0 0 1-34 26 33 26 0 0 1-35-26z" fill="#40567c" /><path d="M-1.500-1.500h31A31 29 0 0 1 62.500 28v8a29 23 0 0 1-31.500 23.500A30 23 0 0 1-1.500 36z" fill="url(#gGearBlue)" /><circle cx="31" cy="28" r="20.500" fill="none" stroke="#6b6f7a" stroke-width="8" stroke-dasharray="7.500 5.380" /><circle cx="31" cy="28" r="20" fill="none" stroke="#c9ccd3" stroke-width="6.500" stroke-dasharray="6.800 5.766" stroke-dashoffset="-.4" /><circle cx="31" cy="28" r="14" fill="none" stroke="#c4c7cf" stroke-width="10" /><circle cx="31" cy="28" r="9" fill="#a9bde3" stroke="#70747f" stroke-width="1.200" /></symbol>
      <symbol id="d-preview" viewBox="0 0 62 62"><rect width="62" height="62" rx="11" fill="#f1f0ee" /><path d="M5 10a5 5 0 0 1 5-5h42a5 5 0 0 1 5 5v24H5z" fill="#8fb4ea" /><path d="M5 33h52v10H5z" fill="#2c4a7d" /><path d="M5 42h52v10a5 5 0 0 1-5 5H10a5 5 0 0 1-5-5z" fill="#b9c6d2" /><path d="M5 48c6-4 12 3 20 0v9H8z" fill="#7b6748" /><path d="M8 42l8 1 3 3-10 1zM24 44l7-1v5z" fill="#3c3630" /><path d="M34 39h22l5 21c1 3-2 5-5 5H34c-4 0-6-2-5-5z" fill="#d9dad9" stroke="#77797a" stroke-width="1.200" /><path d="M39 45h5v5h-5zM46 50h5v4h-5zM38 54h6v4h-6z" fill="#75828f" /><rect x="31" y="31" width="27" height="11" rx="3" fill="#141414" /></symbol>
      <symbol id="d-vlc" viewBox="0 0 62 62"><path d="M6 42h50l6 25H0z" fill="#ef8533" /><path d="M0 63h62l1 4H-1z" fill="#d66b1e" /><path d="M12 46c3 8 35 8 38 0l2 10c-4 7-38 7-42 0z" fill="#d9691f" /><path d="M26-1c1-3 9-3 10 0l2.500 9h-15z" fill="#ef8f33" /><path d="M23.500 8c4 2 11 2 15 0L42 21c-6 2.500-16 2.500-22 0z" fill="#eceaea" /><path d="M20 21c6 2.500 16 2.500 22 0l3.500 12c-7 4-22 4-29 0z" fill="#ef8f33" /><path d="M16.500 33c7 4 22 4 29 0L49 46c-8 5-28 5-36 0z" fill="#eceaea" /></symbol>
      <symbol id="d-emulator" viewBox="0 0 62 62"><circle cx="31" cy="31" r="37" fill="#fff" /><rect x="18.500" y="9" width="26" height="44" rx="2" fill="#fff" stroke="#4d86ee" stroke-width="4.500" /><path d="M21 16c19 0 19 30 0 30z" fill="#5fcf85" /><path d="M33 21l4-3M34 40l4 3" stroke="#5fcf85" stroke-width="1.500" /><circle cx="28" cy="25" r="1.200" fill="#fff" /><circle cx="28" cy="37" r="1.200" fill="#fff" /></symbol>
      <symbol id="d-whatsapp" viewBox="0 0 62 62"><rect width="62" height="62" rx="14" fill="url(#gGreen)" /><path d="M8.500 53.500l3.400-12A22 22 0 1 1 20 50.300z" fill="none" stroke="#f4fbf3" stroke-width="3.800" stroke-linejoin="round" /><path d="M24 20c-5 3-5 9 1 15.500s14 9.500 18 6c2.500-2.500 2-4 .5-5l-4.500-2.500c-1.500-.7-2.200 0-4 2.200-4-1.500-7.500-5-9-8.500 2.200-2 2.300-2.500 1.700-4l-1.900-4c-.5-.8-1-.5-1.800.3z" fill="#f6fcf5" /></symbol>
      <symbol id="d-chrome" viewBox="0 0 62 62"><rect width="62" height="62" rx="14" fill="#f4f2f1" /><circle cx="31" cy="31" r="26" fill="#3f9b52" /><path d="M8.500 18A26 26 0 0 1 53.500 18H31a13 13 0 0 0-11.500 19z" fill="#d94a3d" /><path d="M53.500 18A26 26 0 0 1 31 57l11.300-19.500A13 13 0 0 0 36 18z" fill="#f3bb40" /><circle cx="31" cy="31" r="13" fill="#f7f7f7" /><circle cx="31" cy="31" r="10.300" fill="#3b78e0" /></symbol>
      <symbol id="d-fl" viewBox="0 0 62 62"><circle cx="31" cy="31" r="37" fill="#4f565d" /><circle cx="31" cy="31" r="33" fill="#383d42" /><path d="M15 22c8-6 27-4 33 4 3 14-8 33-20 36-6 2-9-3-11-12-2-9-4-20-2-28z" fill="url(#gFruit)" /><path d="M15 13C20-1 31 1 37 6L48-6l2 1-9 14c9-1 15 8 13 16-4-1-6 0-8 4-6-2-10-8-11-14-4 6-5 9-5 12-4-3-6-8-5-13-4 3-8 3-10-1z" fill="#54803a" /><path d="M19 12c5-7 13-7 17-2M38 11c6 0 11 5 12 11" fill="none" stroke="#b4cf55" stroke-width="3" /></symbol>
    </svg>

    <!-- System menu bar -->
    <header class="menubar">
      <svg class="apple"><use href="#apple" /></svg>
      <nav class="menus">
        <span v-for="(m, i) in menus" :key="m.label" class="menu" :class="{ strong: i === 0 }" :style="{ width: m.slot + 'px' }"><span v-fit="m.w" class="lab">{{ m.label }}</span></span>
      </nav>
      <div class="status">
        <span v-for="s in status" :key="s.id" class="slot" :style="{ width: s.slot + 'px' }"><svg :width="s.w" :height="s.h"><use :href="'#' + s.id" /></svg></span>
        <span class="slot date"><span v-fit="125" class="lab">Thu 7 Nov</span></span>
        <span class="slot clock"><span v-fit="70" class="lab">10:05</span></span>
      </div>
    </header>

    <main class="window">
      <div class="tabstrip">
        <div class="lights"><i class="red"></i><i class="amber"></i><i class="green"></i></div>
        <div v-for="(t, i) in tabs" :key="i" class="tab" :class="{ narrow: t.narrow, active: t.active, plain: i === 9 || i === 10 }">
          <svg class="fav"><use :href="'#' + t.icon" /></svg>
          <span class="title" :class="{ whole: i === 11 }">{{ t.label }}</span>
          <svg class="x"><use href="#c-close" /></svg>
        </div>
        <svg class="plus" viewBox="0 0 20 20"><path d="M10 0v20M0 10h20" stroke="#c7c7c7" stroke-width="2.600" /></svg>
        <div class="dropdown"><svg viewBox="0 0 22 12" width="16" height="10"><path d="M1.500 1.500L11 10.500l9.500-9" fill="none" stroke="#e3e3e3" stroke-width="3.600" /></svg></div>
      </div>

      <div class="chrome">
        <div class="toolbar">
          <svg class="back"><use href="#c-back" /></svg>
          <svg class="fwd"><use href="#c-back" /></svg>
          <svg class="reload"><use href="#c-reload" /></svg>
          <div class="omnibox">
            <span class="site"><svg width="24" height="24"><use href="#c-site" /></svg></span>
            <span v-fit="717" class="url lab"><b>nslookup.io</b>/domains/cheapexpense.com/dns-records/</span>
            <span class="omni-actions">
              <svg width="34" height="30"><use href="#c-install" /></svg>
              <svg width="37" height="32"><use href="#c-eye" /></svg>
              <svg width="34" height="34"><use href="#c-star" /></svg>
            </span>
          </div>
          <svg class="puzzle"><use href="#c-puzzle" /></svg>
          <i class="rule tall"></i>
          <svg class="music"><use href="#c-music" /></svg>
          <svg class="download"><use href="#c-download" /></svg>
          <svg class="avatar"><use href="#c-avatar" /></svg>
          <span class="dots"><i></i><i></i><i></i></span>
        </div>

        <div class="bookmarks">
          <svg class="apps" viewBox="0 0 28 28"><path d="M1.400 1.400h9v9h-9zM17.600 1.400h9v9h-9zM1.400 17.600h9v9h-9zM17.600 17.600h9v9h-9z" fill="none" stroke="#c7c7c7" stroke-width="2.800" /></svg>
          <i class="rule first"></i>
          <span v-for="(b, i) in bookmarks" :key="i" class="bm" :style="{ width: b.slot + 'px' }">
            <svg class="fav"><use :href="'#' + b.icon" /></svg>
            <span v-if="b.label" v-fit="b.w" class="lab">{{ b.label }}</span>
          </span>
          <svg class="more" viewBox="0 0 20 18"><path d="M1.500 1l7.500 8-7.500 8M10.500 1L18 9l-7.500 8" fill="none" stroke="#c7c7c7" stroke-width="2.400" /></svg>
          <i class="rule last"></i>
          <svg class="folder"><use href="#c-folder" /></svg>
          <span v-fit="162" class="lab">All Bookmarks</span>
        </div>
      </div>

      <div class="viewport">
        <div class="page">
          <div class="banner">
            <span v-fit="729" class="lab">DNS for Developers — Learn DNS once and for all</span>
            <svg class="dismiss" viewBox="0 0 24 24"><path d="M1.500 1.500l21 21M22.500 1.500l-21 21" stroke="#fff" stroke-width="2.400" stroke-linecap="round" /></svg>
          </div>

          <div class="site-header">
            <span v-fit="287" class="logo lab">NsLookup.io</span>
            <form class="search">
              <div class="field">
                <svg viewBox="0 0 32 32" width="34" height="34"><circle cx="14" cy="14" r="12.500" fill="none" stroke="#9ca3af" stroke-width="2.600" /><path d="M23 23l7.500 7.500" stroke="#9ca3af" stroke-width="2.600" stroke-linecap="round" /></svg>
                <span v-fit="283" class="lab">cheapexpense.com</span>
              </div>
              <div class="find"><span v-fit="257" class="lab">Find DNS records</span></div>
            </form>
            <nav class="links">
              <span v-fit="126" class="lab">Learning</span>
              <span v-fit="268" class="lab">Browser extension</span>
              <span v-fit="231" class="lab">DNS lookup API</span>
            </nav>
          </div>

          <div class="content">
            <h1><span v-fit="415" class="lab">DNS records for</span><b v-fit="549" class="lab">cheapexpense.com</b></h1>
            <div class="resolvers">
              <div v-for="r in resolvers" :key="r.label" class="resolver" :class="{ active: r.active }" :style="{ width: r.slot + 'px' }">
                <span class="inner"><span v-fit="r.w" class="lab">{{ r.label }}</span></span>
                <svg v-if="r.menu" class="chev"><use href="#c-chevron" /></svg>
              </div>
              <svg class="gear"><use href="#c-gear" /></svg>
            </div>

            <section class="panel">
              <p class="intro">
                <span v-fit="2171" class="lab">The Cloudflare DNS server responded with these DNS records. Cloudflare will serve these records for as long as the time to live (TTL) has not expired.</span><br />
                <span v-fit="1440" class="lab">After this period, Cloudflare will update its cache by querying one of the authoritative name servers.</span>
              </p>
              <h2 class="h-a"><span v-fit="211" class="lab">A records</span></h2>
              <div class="table">
                <div class="row head">
                  <span class="cell ip"><span v-fit="194" class="lab">IPv4 address</span></span>
                  <span class="cell"><span v-fit="189" class="lab">Revalidate in</span></span>
                </div>
                <div class="row">
                  <svg class="expand" viewBox="0 0 16 28"><path d="M1.500 1.500L14 14 1.500 26.500" fill="none" stroke="#000" stroke-width="2.400" /></svg>
                  <span class="cell ip">
                    <svg class="host" viewBox="0 0 32 32"><rect width="32" height="32" rx="6" fill="#dd6b36" /><path d="M6 22l4-10q1.500-3 4 1l4 6.500q2.500 4 4 0L26 10" fill="none" stroke="#fbe9de" stroke-width="3.600" stroke-linecap="round" /></svg>
                    <span v-fit="220" class="lab">198.54.115.236</span>
                  </span>
                  <span class="cell"><span v-fit="39" class="lab">4h</span></span>
                </div>
              </div>
              <h2 class="h-aaaa"><span v-fit="309" class="lab">AAAA records</span></h2>
              <p class="note"><span v-fit="354" class="lab">No AAAA records found.</span></p>
              <h2 class="h-cname"><span v-fit="323" class="lab">CNAME record</span></h2>
              <p class="note"><span v-fit="367" class="lab">No CNAME record found.</span></p>
              <h2 class="h-txt"><span v-fit="268" class="lab">TXT records</span></h2>
              <h3><span v-fit="182" class="lab">SPF record</span></h3>
              <p class="note"><span v-fit="376" class="lab">This record is valid for 4h.</span></p>
              <div class="record"></div>
            </section>
          </div>
        </div>
        <div class="scrollbar"><div class="thumb"></div></div>
      </div>
      <div class="shade"></div>
    </main>

    <footer class="dock">
      <div v-for="d in dockMain" :key="d.id" class="app">
        <svg v-if="d.id === 'd-launchpad'" class="ic" viewBox="0 0 62 62"><rect width="62" height="62" rx="14" fill="#b2b2b1" /><rect v-for="(c, i) in padColors" :key="i" :x="10 + (i % 3) * 15" :y="10 + Math.floor(i / 3) * 15.200" width="11.500" height="11.500" rx="2.500" :fill="c" /></svg>
        <svg v-else-if="d.id === 'd-photos'" class="ic" viewBox="0 0 62 62"><rect width="62" height="62" rx="14" fill="#fff" /><ellipse v-for="(c, i) in petals" :key="c" class="petal" cx="31" cy="17" rx="8.500" ry="13" :fill="c" :transform="`rotate(${i * 45} 31 31)`" /></svg>
        <svg v-else class="ic"><use :href="'#' + d.id" /></svg>
        <span v-if="d.badge" class="badge">{{ d.badge }}</span>
        <i v-if="d.run" class="dot"></i>
      </div>
      <i class="divider"></i>
      <div v-for="a in dockApps" :key="a" class="app"><svg class="ic"><use :href="'#' + a" /></svg><i class="dot"></i></div>
      <i class="divider files"></i>
      <div class="app">
        <svg class="ic" viewBox="0 0 62 62"><path d="M12-6h24l12 16v12H12z" fill="#ececec" /><path d="M36-6c4 4 9 10 12 16H36z" fill="#fff" stroke="#b7b7b7" stroke-width=".6" /><path d="M15-2h16M15 1h16M15 4h18" stroke="#bbb" stroke-width=".9" /><path d="M2 12V7q0-3 3-3h12l4 5h33v4z" fill="#4fa9e0" /><rect y="10" width="63" height="47" fill="#fff" /><rect x="3" y="13" width="57" height="41" fill="#efe3c8" /><path d="M6 16h24M6 18h50" stroke="#8a7f66" stroke-width=".8" /><path d="M6 22h11v8H6zM6 33h11v8H6zM46 22h11v8H46zM46 33h11v8H46z" fill="#e6c684" /><path d="M6 48h50v3H6z" fill="#ddc795" /><path d="M22 24q8-8 16 0 5 8 1 13l-5-4-2 6q-11-1-10-15z" fill="#3f5d46" /></svg>
      </div>
      <div class="app">
        <svg class="win" viewBox="0 0 71 62"><rect width="71" height="62" fill="#262829" /><rect width="21" height="62" fill="#46484c" /><path d="M2 8h14M2 13h12M2 17h10M2 21h13M2 25h11M2 29h12M2 33h10M2 37h13M2 45h14M2 50h12M2 55h11M2 59h12" stroke="#7d8087" stroke-width="1.200" /><rect x="1" y="40" width="18" height="2.600" fill="#2f6fd6" /><circle cx="3" cy="2.500" r="1" fill="#e0594c" /><circle cx="6" cy="2.500" r="1" fill="#68b04f" /><rect x="45" y="6" width="7" height="5" fill="#5f9bd6" /><rect x="53" y="6" width="7" height="5" fill="#3c8c5a" /><rect x="61" y="6" width="7" height="5" fill="#356fc2" /><path d="M25 7h8M25 16h10M25 22h12M25 26h10M25 30h18M25 34h9M25 37h26M25 40h24M25 44h20M25 47h17M60 22h8M60 26h7" stroke="#84878a" stroke-width="1.100" /><path d="M46 16h22" stroke="#a5528b" stroke-width="1.800" stroke-dasharray="2 1" /></svg>
        <span class="tag"><svg viewBox="0 0 62 62"><use href="#d-settings" /></svg></span>
      </div>
      <div v-for="(m, k) in minimised" :key="k" class="app">
        <svg v-if="m.kind === 'editor'" class="win" viewBox="0 0 71 62">
          <rect width="71" height="62" fill="#17191b" /><rect width="3.500" height="62" fill="#23272b" /><rect x="3.500" width="16" height="62" fill="#1e2123" />
          <path d="M1 1.500h20M30 3.500h14M48 3.500h18" stroke="#555a60" stroke-width="1.200" />
          <path d="M5 7h9M5 10h11M6 13h8M6 16h10M6 19h7M5 22h10M6 25h9M6 28h7M5 31h9" stroke="#5b6065" stroke-width="1" />
          <g class="code"><path v-for="(r, i) in m.rows" :key="i" :d="`M${r.x} ${r.y}h${r.w}`" :stroke="r.tint" stroke-width="1" /></g>
          <path :d="`M19 ${m.termY * .62 + 2}h24m-24 3h30m-30 3h22m-22 3h28m-28 3h20m-20 3h26`" :stroke="m.term" stroke-width="1.100" stroke-dasharray="3 1" />
          <rect v-if="m.bar" y="59.500" width="71" height="2.500" fill="#2471b8" />
        </svg>
        <svg v-else class="win" viewBox="0 0 71 62"><rect y="1" width="71" height="60" fill="#45494e" /><path d="M1 8h70" stroke="#2f3337" /><path d="M4 11h14M4 15.500h16M4 20h12M4 24.500h15M4 29h13M4 33.500h16M4 45h12M4 49h14M4 53h13" stroke="#7e838a" stroke-width="1.200" /><path d="M55 11h3M62 11h3M55 17h3M62 17h3M55 23h3M62 23h3M55 29h3M62 29h3M55 35h3M62 35h3" stroke="#8b9096" stroke-width="1.200" /><rect y="38" width="71" height="3" fill="#2f66c8" /><circle cx="3" cy="3.500" r=".9" fill="#e0594c" /><circle cx="6" cy="3.500" r=".9" fill="#68b04f" /></svg>
        <span class="tag white"><svg viewBox="0 0 62 62"><use :href="m.kind === 'editor' ? '#d-vscode' : '#d-studio'" /></svg></span>
      </div>
      <div class="app">
        <svg class="ic" viewBox="0 0 62 62"><path d="M5 8L10-2l7 3 5-5 7 4 6-6 6 5 8-2 4 8 6 4-2 4H7z" fill="#e8e8e6" /><path d="M12 2l8 6-4 4zM34-1l8 8-5 4zM48 1l4 8-6 2zM24 2l5 8-6 1z" fill="#6c6f72" /><path d="M14 3l5 2-2 3z" fill="#3a78b8" /><path d="M38 4l4 2-3 3z" fill="#c46a2c" /><path d="M3 7c8 7 48 7 56 0l-6 52c-1 6-43 6-44 0z" fill="url(#gMetal)" /><path d="M3 7c8 7 48 7 56 0v3c-8 6-48 6-56 0z" fill="#b9bbbc" opacity=".7" /><path d="M17 20l3 38M30 22v40M44 20l-4 38" stroke="#c7c9ca" stroke-width="1" opacity=".35" /></svg>
      </div>
    </footer>
  </div>
</template>

<style>
html,
body {
  margin: 0;
  background: #0a0b06;
}
</style>

<style scoped>
.screen {
  width: 3360px;
  height: 2100px;
  overflow: hidden;
  display: flex;
  flex-direction: column;
  align-items: flex-start;
  position: relative;
  font-family: Inter, "Liberation Sans", sans-serif;
  color: #000;
  background:
    radial-gradient(200px 60px at 1180px 2096px, rgba(110, 96, 30, 0.5), transparent),
    radial-gradient(360px 50px at 2040px 2098px, rgba(96, 92, 30, 0.55), transparent),
    radial-gradient(300px 90px at 3350px 2040px, rgba(66, 52, 24, 0.6), transparent),
    radial-gradient(500px 40px at 2900px 2100px, rgba(64, 48, 22, 0.7), transparent),
    radial-gradient(400px 40px at 400px 2100px, rgba(24, 40, 12, 0.7), transparent),
    linear-gradient(#b9b8ae 0, #b9b8ae 100px, #070804 101px, #070804 100%);
}
.sprite { position: absolute; }
svg { display: block; flex: none; overflow: visible; }
symbol { overflow: visible; }
.lab { display: inline-block; white-space: pre; }
i { display: block; }

/* Menu bar */
.menubar {
  width: 3360px;
  height: 48px;
  flex: none;
  display: flex;
  align-items: center;
  background: linear-gradient(90deg, #f2f0e7, #ebe9e0 45%, #e6e2d9);
  font-size: 26px;
  line-height: 45px;
}
.apple { width: 31px; height: 31px; margin: -3px 0 0 38px; }
.menus { display: flex; height: 48px; margin-left: 39px; }
.strong { font-weight: 700; }
.status { display: flex; margin-left: auto; height: 48px; color: #1c1c1a; }
.slot { display: flex; align-items: center; height: 48px; }
.date, .clock { align-items: flex-start; }
.date { width: 141px; }
.clock { width: 106px; }

/* Window */
.window {
  width: 3360px;
  height: 1934px;
  flex: none;
  box-sizing: border-box;
  border-top: 2px solid #000;
  border-radius: 22px;
  overflow: hidden;
  position: relative;
  display: flex;
  flex-direction: column;
  background: #1f2120;
}
.window::after {
  content: "";
  position: absolute;
  inset: 0;
  border-radius: 20px;
  box-shadow: inset 0 0 0 2px rgba(190, 200, 195, 0.32);
  pointer-events: none;
}
.tabstrip { height: 80px; flex: none; display: flex; align-items: center; font-size: 24px; font-weight: 450; color: #c7c7c7; }
.lights { display: flex; gap: 16px; margin: 2px 32px 0 42px; width: 104px; flex: none; }
.lights i { width: 24px; height: 24px; border-radius: 50%; }
.red { background: #ed6a5e; }
.amber { background: #f5bf4f; }
.green { background: #61c554; }
.tab { width: 245.800px; height: 32px; flex: none; box-sizing: border-box; padding-left: 22px; display: flex; align-items: center; border-right: 3px solid #404241; }
.tab.narrow { width: 244px; }
.tab.plain { border-right-color: transparent; }
.tab .fav { width: 32px; height: 32px; }
.title { width: 105px; margin-left: 16px; line-height: 32px; overflow: hidden; white-space: nowrap; letter-spacing: -0.2px; mask-image: linear-gradient(90deg, #000 62%, transparent 98%); }
.title.whole { mask-image: none; }
.tab .x { width: 16px; height: 16px; margin-left: 23px; }
.tab.active { position: relative; color: #e6e6e6; }
.tab.active > * { position: relative; }
.tab.active::before {
  content: "";
  position: absolute;
  left: 6px;
  top: -28px;
  width: 232px;
  height: 70px;
  border-radius: 20px 20px 0 0;
  background: #3c3c3c;
}
.tab.active::after {
  content: "";
  position: absolute;
  left: -14px;
  top: 20px;
  width: 272px;
  height: 20px;
  background:
    radial-gradient(circle at 0 0, transparent 19.500px, #3c3c3c 20px) left / 20px 20px no-repeat,
    radial-gradient(circle at 100% 0, transparent 19.500px, #3c3c3c 20px) right / 20px 20px no-repeat;
}
.plus { width: 20px; height: 20px; margin-left: 25px; }
.dropdown { width: 56px; height: 56px; border-radius: 18px; background: #3c3c3c; margin: 0 12px 0 auto; display: flex; align-items: center; justify-content: center; }

.chrome { height: 162px; flex: none; background: #3c3c3c; border-radius: 16px 16px 0 0; box-sizing: border-box; border-bottom: 2px solid #4a4a4a; color: #c7c7c7; }
.toolbar { height: 92px; display: flex; align-items: center; }
.back { width: 24px; height: 24px; margin-left: 32px; }
.fwd { width: 24px; height: 24px; margin-left: 48px; color: #7b7b7b; transform: scaleX(-1); }
.reload { width: 26px; height: 26px; margin-left: 47px; }
.omnibox { width: 2700px; height: 68px; margin-left: 39px; border-radius: 34px; background: #282828; display: flex; align-items: center; box-sizing: border-box; padding: 0 32px 0 10px; font-size: 28px; }
.site { width: 48px; height: 48px; border-radius: 50%; background: #3c3c3c; display: flex; align-items: center; justify-content: center; margin-right: 15px; color: #e0e0e0; }
.url b { font-weight: 400; color: #ececec; }
.omni-actions { margin-left: auto; display: flex; align-items: center; gap: 28px; }
.puzzle { width: 33px; height: 33px; margin-left: 36px; }
.rule { width: 3px; height: 32px; background: #606060; flex: none; }
.rule.tall { margin-left: 35px; }
.music { width: 32px; height: 28px; margin: -4px 0 0 37px; }
.download { width: 32px; height: 32px; margin-left: 40px; }
.avatar { width: 40px; height: 40px; margin-left: 36px; }
.dots { display: flex; flex-direction: column; gap: 5px; margin-left: 49px; }
.dots i { width: 6px; height: 6px; border-radius: 50%; background: #c7c7c7; }

.bookmarks { height: 56px; display: flex; align-items: center; font-size: 24px; font-weight: 450; line-height: 32px; }
.apps { width: 28px; height: 28px; margin-left: 38px; }
.rule.first { margin: 0 28px 0 31px; }
.bm { display: flex; align-items: center; gap: 12px; flex: none; }
.bm .fav { width: 32px; height: 32px; }
.more { width: 20px; height: 18px; margin-left: 31px; }
.rule.last { margin: 0 33px 0 34px; }
.folder { width: 32px; height: 26px; margin-right: 15px; }

/* Page */
.viewport { flex: 1; display: flex; min-height: 0; }
.page { width: 3330px; background: #f4f4f4; overflow: hidden; display: flex; flex-direction: column; }
.banner { height: 80px; flex: none; background: #330f5c; color: #fff; display: flex; align-items: center; padding-left: 1264px; font-size: 32px; line-height: 80px; font-weight: 450; }
.dismiss { width: 24px; height: 24px; margin: 0 24px 0 auto; }
.site-header { height: 144px; flex: none; background: #fff; border-bottom: 2px solid #e5e7eb; display: flex; align-items: center; font-size: 32px; line-height: 80px; color: #1f2937; }
.logo { width: 290px; margin: -4px 0 0 47px; color: #330f5c; font-family: Lato, sans-serif; font-weight: 900; font-style: italic; font-size: 50px; }
.search { display: flex; width: 1000px; height: 80px; box-sizing: border-box; margin: 0 0 0 746px; border: 2px solid #d1d5db; border-radius: 12px; }
.field { width: 676px; box-sizing: border-box; display: flex; align-items: center; padding-left: 25px; gap: 30px; line-height: 76px; border-right: 2px solid #d1d5db; }
.find { padding-left: 32px; line-height: 76px; font-weight: 450; }
.links { margin: 0 38px 0 auto; display: flex; gap: 48px; font-weight: 450; }
.content { width: 2304px; margin-left: 513px; flex: 1; display: flex; flex-direction: column; }
h1 { margin: 64px 0 0 47px; height: 72px; line-height: 72px; font-size: 60px; font-weight: 400; display: flex; }
h1 b { font-weight: 700; margin-left: 6px; white-space: pre; }
h1 span { width: 415px; }
.resolvers { display: flex; align-items: flex-start; height: 112px; margin: 44px 0 0 48px; font-size: 28px; line-height: 112px; font-weight: 500; color: #4b5563; }
.resolver { height: 112px; display: flex; align-items: center; }
.inner { padding-left: 8px; }
.active .inner { width: 146px; height: 108px; border-bottom: 4px solid #5b67e8; color: #5053dd; }
.chev { width: 22px; height: 12px; margin-left: 25px; }
.gear { width: 48px; height: 48px; margin: 33px 31px 0 auto; color: #4b5563; }
.panel { flex: 1; margin-top: 0; background: #fff; border-radius: 12px 12px 0 0; box-shadow: 0 2px 6px rgba(0, 0, 0, 0.14); padding: 0 48px; font-size: 32px; line-height: 48px; }
.panel p { margin: 0; white-space: nowrap; }
.panel .intro { margin-top: 48px; }
h2 { margin: 0; font-size: 48px; line-height: 64px; font-weight: 600; }
h2 .lab, h3 .lab, .note .lab, .intro .lab { vertical-align: top; }
.h-a { margin-top: 65px; }
.table { width: 1344px; margin-top: 28px; }
.row { display: flex; align-items: center; height: 66px; position: relative; padding-left: 73px; }
.row.head { height: 48px; padding-bottom: 12px; border-bottom: 4px solid #e2e5e9; font-weight: 500; }
.cell.ip { width: 888px; display: flex; align-items: center; gap: 12px; }
.expand { width: 16px; height: 28px; margin: 2px 30px 0 -46px; }
.host { width: 32px; height: 32px; }
.h-aaaa { margin-top: 61px; }
.panel .note { margin-top: 16px; }
.h-cname { margin-top: 64px; }
.h-txt { margin-top: 76px; }
h3 { margin: 40px 0 0; font-size: 36px; line-height: 56px; font-weight: 500; }
.record { margin-top: 23px; height: 60px; border: 2px solid #dcdde3; border-radius: 12px; }
.scrollbar { flex: 1; background: #2c2c2c; border-left: 2px solid #3a3a3a; }
.thumb { width: 15px; height: 480px; margin: 5px 0 0 6px; border-radius: 8px; background: #6b6b6b; }
.shade {
  position: absolute;
  left: 0;
  right: 0;
  bottom: 0;
  height: 96px;
  background: linear-gradient(transparent, rgba(0, 0, 0, 0.03) 45%, rgba(0, 0, 0, 0.11));
  mask-image: linear-gradient(90deg, transparent 10px, #000 140px, #000 3200px, transparent 3340px);
}

/* Dock */
.dock {
  width: 3234px;
  height: 98px;
  flex: none;
  box-sizing: border-box;
  margin: 10px 0 0 63px;
  padding-left: 3px;
  border: 2px solid #46463f;
  border-radius: 27px;
  display: flex;
  background: linear-gradient(90deg, #1c1d14, #201e14 30%, #1c1c15 45%, #2e2616 64%, #1f1e15 74%, #262014);
}
.app { width: 80.750px; height: 94px; flex: none; position: relative; display: flex; flex-direction: column; align-items: center; }
.ic { width: 62px; height: 62px; margin-top: 13px; }
.win { width: 71px; height: 62px; margin-top: 12px; }
.petal { mix-blend-mode: multiply; opacity: 0.9; }
.dot { position: absolute; left: 36.500px; bottom: 4px; width: 8px; height: 8px; border-radius: 50%; background: #a3a295; }
.badge { position: absolute; left: 50px; top: 6px; width: 28px; height: 28px; border-radius: 50%; background: #ec5545; color: #fff; font-size: 16px; line-height: 28px; text-align: center; }
.tag { position: absolute; left: 51px; top: 55px; width: 24px; height: 24px; }
.tag svg { width: 24px; height: 24px; }
.divider { width: 2px; height: 70px; margin: 12px 18px 0 16.500px; background: #5c5b50; flex: none; }
.divider.files { margin: 12px 15.500px 0 19px; }
</style>
